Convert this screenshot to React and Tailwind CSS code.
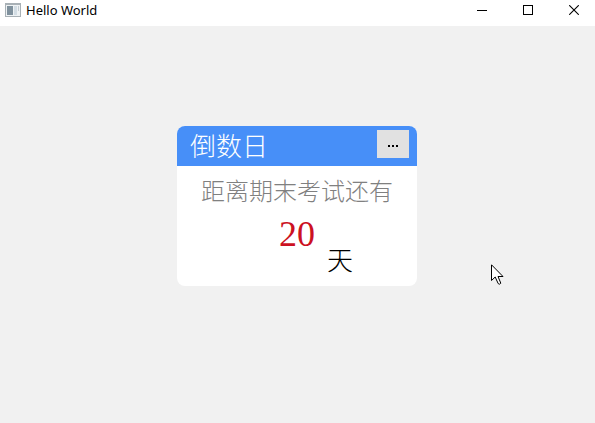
function AppIcon() {
  return (
    <svg width="16" height="16" viewBox="0 0 16 16" shapeRendering="crispEdges" aria-hidden="true">
      <rect x="0" y="1" width="16" height="14" fill="#a9b1b6" />
      <rect x="1" y="3" width="14" height="11" fill="#eef2f4" />
      <rect x="2" y="4" width="6" height="9" fill="#80919d" />
      <rect x="9" y="4" width="3" height="9" fill="#d3dde4" />
      <rect x="13" y="4" width="1" height="5" fill="#c3ccd2" />
    </svg>
  );
}

function Pointer() {
  return (
    <svg
      className="pointer-events-none absolute left-[491px] top-[264px]"
      width="13"
      height="22"
      viewBox="0 0 13 22"
      aria-hidden="true"
    >
      <path
        d="M0.5 0.8 V16.5 L4.2 13 L7.2 19.6 Q8.4 21 9.8 19.2 L7 12.5 H12 Z"
        fill="#fff"
        stroke="#000"
        strokeWidth="1"
      />
    </svg>
  );
}

function TitleBar() {
  return (
    <header className="flex h-[26px] items-start justify-between bg-white">
      <div className="flex h-5 items-center gap-[5px] pl-[5px]">
        <AppIcon />
        <h1 className="font-['Noto_Sans','Noto_Sans_CJK_SC',sans-serif] text-[13px] leading-5 text-black">
          Hello World
        </h1>
      </div>
      <div className="flex h-5 gap-1">
        <button type="button" aria-label="Minimize" className="flex w-[42px] items-center justify-center">
          <svg width="10" height="10" viewBox="0 0 10 10" shapeRendering="crispEdges">
            <rect x="0" y="5" width="10" height="1" fill="#000" />
          </svg>
        </button>
        <button type="button" aria-label="Maximize" className="flex w-[42px] items-center justify-center">
          <svg width="10" height="10" viewBox="0 0 10 10" shapeRendering="crispEdges">
            <rect x="0.5" y="0.5" width="9" height="9" fill="none" stroke="#000" />
          </svg>
        </button>
        <button type="button" aria-label="Close" className="flex w-[42px] items-center justify-center">
          <svg width="10" height="10" viewBox="0 0 10 10">
            <path d="M0.2 0.2 L9.8 9.8 M9.8 0.2 L0.2 9.8" stroke="#000" strokeWidth="1.1" />
          </svg>
        </button>
      </div>
    </header>
  );
}

function CountdownCard() {
  return (
    <section className="w-60 overflow-hidden rounded-lg bg-white pb-1 font-['Liberation_Serif','Noto_Sans_CJK_SC',serif] font-light">
      <div className="flex h-10 items-start justify-between bg-[#478ff8] pl-[13px] pr-2 pt-1">
        <h2 className="text-[26px] leading-9 text-white">倒数日</h2>
        <button
          type="button"
          aria-label="More"
          className="flex h-7 w-8 items-center justify-center gap-[2px] bg-[#e1e1e1]"
        >
          <span className="mt-1 h-[2px] w-[2px] bg-black" />
          <span className="mt-1 h-[2px] w-[2px] bg-black" />
          <span className="mt-1 h-[2px] w-[2px] bg-black" />
        </button>
      </div>
      <p className="pt-2 text-center text-[24px] leading-9 text-[#808080]">距离期末考试还有</p>
      <div className="grid grid-cols-[1fr_auto_1fr] gap-x-3">
        <span className="col-start-2 text-[36px] leading-[48px] text-[#cc1122]">20</span>
        <span className="pt-8 text-[26px] leading-10 text-black">天</span>
      </div>
    </section>
  );
}

export default function App() {
  return (
    <div className="relative flex min-h-screen flex-col bg-[#f1f1f1]">
      <TitleBar />
      <main className="flex flex-1 items-start justify-center pr-px pt-[100px]">
        <CountdownCard />
      </main>
      <Pointer />
    </div>
  );
}
